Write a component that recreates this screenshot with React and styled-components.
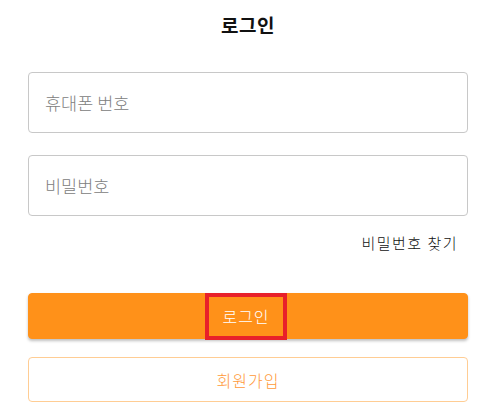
import React from "react";
import styled, { createGlobalStyle } from "styled-components";

const Global = createGlobalStyle`
  body {
    margin: 0;
    background: #fff;
    font-family: "Noto Sans CJK KR", "Noto Sans", sans-serif;
  }
`;

const Page = styled.div`
  width: 440px;
  margin-left: 28px;
  display: flex;
  flex-direction: column;
`;

const Title = styled.h1`
  margin: 0;
  height: 50px;
  line-height: 50px;
  text-align: center;
  font-size: 19px;
  font-weight: 700;
  color: #111;
  letter-spacing: 0.5px;
`;

const Input = styled.input`
  box-sizing: border-box;
  width: 100%;
  height: 61px;
  margin-top: ${(p) => p.$top}px;
  padding: 0 16px;
  border: 1px solid #c8c8c8;
  border-radius: 4px;
  font-family: inherit;
  font-size: 17.5px;
  font-weight: 300;
  color: #222;
  outline: none;
  &::placeholder {
    color: #808080;
  }
`;

const LinkRow = styled.div`
  display: flex;
  justify-content: flex-end;
  padding: 16px 10px 0 0;
  height: 42px;
  box-sizing: border-box;
`;

const Link = styled.a`
  font-size: 15px;
  font-weight: 300;
  color: #111;
  text-decoration: none;
  letter-spacing: 1.5px;
`;

const Button = styled.button`
  box-sizing: border-box;
  width: 100%;
  height: ${(p) => (p.$primary ? 46 : 45)}px;
  margin-top: ${(p) => p.$top}px;
  display: flex;
  align-items: center;
  justify-content: center;
  border-radius: 4px;
  border: 1px solid ${(p) => (p.$primary ? "#ff9119" : "#ffcd94")};
  background: ${(p) => (p.$primary ? "#ff9119" : "#fff")};
  color: ${(p) => (p.$primary ? "#fff" : "#ff9a3a")};
  box-shadow: ${(p) => (p.$primary ? "0 2px 3px rgba(0,0,0,0.25)" : "none")};
  font-family: inherit;
  font-size: 16px;
  font-weight: 300;
  letter-spacing: 1px;
  cursor: pointer;
  overflow: visible;
`;

const Highlight = styled.span`
  box-sizing: border-box;
  display: inline-flex;
  align-items: center;
  justify-content: center;
  width: 82px;
  height: 47px;
  margin-left: -4px;
  border: 4px solid #e8202a;
`;

export default function App() {
  return (
    <>
      <Global />
      <Page>
        <Title>로그인</Title>
        <Input $top={22} placeholder="휴대폰 번호" />
        <Input $top={22} type="password" placeholder="비밀번호" />
        <LinkRow>
          <Link href="#">비밀번호 찾기</Link>
        </LinkRow>
        <Button $primary $top={35}>
          <Highlight>로그인</Highlight>
        </Button>
        <Button $top={18}>회원가입</Button>
      </Page>
    </>
  );
}
